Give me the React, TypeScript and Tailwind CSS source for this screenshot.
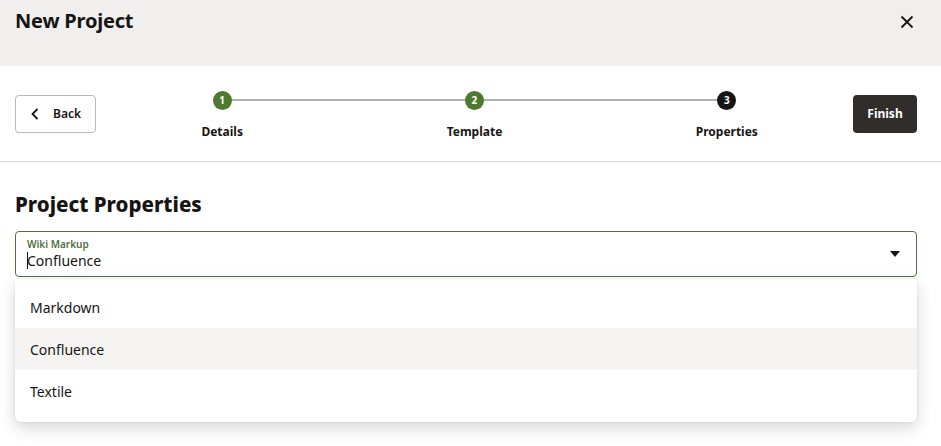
import { useState } from "react";

const steps = [
  { n: 1, label: "Details", done: true },
  { n: 2, label: "Template", done: true },
  { n: 3, label: "Properties", done: false },
];

const options = ["Markdown", "Confluence", "Textile"];

export default function App() {
  const [value, setValue] = useState("Confluence");

  return (
    <div
      className="flex h-[446px] w-[941px] flex-col overflow-hidden bg-white text-[#161513]"
      style={{ fontFamily: "'Noto Sans', 'Open Sans', sans-serif" }}
    >
      {/* Dialog header */}
      <header className="flex h-[66px] shrink-0 items-start justify-between bg-[#f1efed] pl-[15px] pr-[22px] pt-[7px]">
        <h1 className="text-[20px] font-bold leading-[28px] tracking-[-0.2px]">New Project</h1>
        <button className="mt-[3px] flex h-6 w-6 items-center justify-center" aria-label="Close">
          <svg width="14" height="14" viewBox="0 0 14 14" fill="none" stroke="#161513" strokeWidth="1.8">
            <path d="M1.5 1.5l11 11M12.5 1.5l-11 11" />
          </svg>
        </button>
      </header>

      {/* Train / toolbar */}
      <div className="flex h-[96px] shrink-0 items-center border-b border-[#d9d6d3] pl-[15px] pr-[24px]">
        <button className="flex h-[38px] w-[81px] items-center gap-[14px] rounded-[4px] border border-[#bcb8b4] pl-[15px] text-[12px] font-semibold">
          <svg width="8" height="12" viewBox="0 0 8 12" fill="none" stroke="#161513" strokeWidth="1.8">
            <path d="M6.5 1L1.5 6l5 5" />
          </svg>
          Back
        </button>

        <div className="mt-[4px] grid flex-1 grid-cols-3">
          {steps.map((s, i) => (
            <div key={s.n} className="relative flex flex-col items-center">
              {i > 0 && <div className="absolute left-0 right-1/2 top-[8px] h-[2px] bg-[#b3b0ad]" />}
              {i < steps.length - 1 && (
                <div className="absolute left-1/2 right-0 top-[8px] h-[2px] bg-[#b3b0ad]" />
              )}
              <div
                className={`relative z-10 flex h-[19px] w-[19px] items-center justify-center rounded-full text-[10px] font-bold text-white ${
                  s.done ? "bg-[#4d7a2e]" : "bg-[#161513]"
                }`}
              >
                {s.n}
              </div>
              <span className="mt-[14px] text-[12px] font-bold leading-[16px]">{s.label}</span>
            </div>
          ))}
        </div>

        <button className="h-[38px] w-[64px] rounded-[4px] bg-[#312d2a] text-[12px] font-bold text-white">
          Finish
        </button>
      </div>

      {/* Content */}
      <main className="flex flex-col pl-[15px] pr-[24px] pt-[27px]">
        <h2 className="text-[20.5px] font-extrabold leading-[30px]">Project Properties</h2>

        <div className="mt-[12px] flex h-[46px] items-center rounded-[4px] border border-[#4f6f3f] pl-[11px] pr-[16px]">
          <div className="flex flex-1 flex-col">
            <span className="text-[10px] font-semibold leading-[13px] text-[#4f6f3f]">Wiki Markup</span>
            <span className="flex items-center text-[14px] leading-[20px]">
              <span className="mr-[-1px] h-[17px] w-[1px] bg-[#161513]" />
              {value}
            </span>
          </div>
          <svg width="10" height="6" viewBox="0 0 10 6" fill="#161513">
            <path d="M0 0h10L5 6z" />
          </svg>
        </div>

        <ul className="mt-[2px] rounded-b-[6px] bg-white pb-[10px] pt-[7px] shadow-[0_6px_16px_rgba(0,0,0,0.16),0_0_3px_rgba(0,0,0,0.08)]">
          {options.map((o) => (
            <li
              key={o}
              onClick={() => setValue(o)}
              className={`flex h-[42px] cursor-pointer items-center pl-[15px] text-[14px] ${
                o === value ? "bg-[#f5f4f2]" : ""
              }`}
            >
              {o}
            </li>
          ))}
        </ul>
      </main>
    </div>
  );
}
